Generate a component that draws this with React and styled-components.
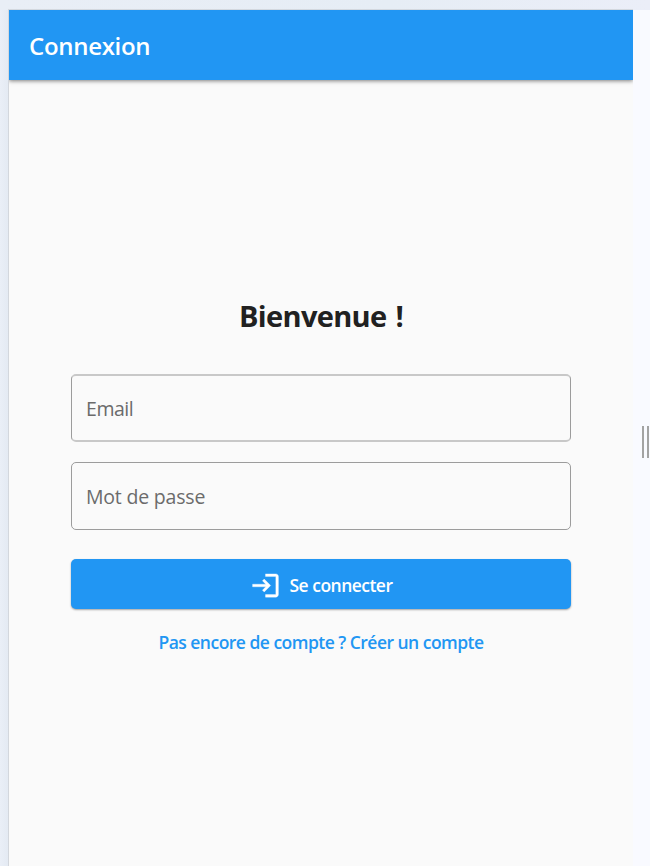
import React from "react";
import styled, { createGlobalStyle } from "styled-components";

const GlobalStyle = createGlobalStyle`
  * { box-sizing: border-box; }
  body { margin: 0; background: #f9faff; font-family: "Open Sans", "Noto Sans", sans-serif; overflow: hidden; }
`;

const Page = styled.div`
  display: flex;
  flex-direction: column;
  width: 650px;
  height: 866px;
  overflow: hidden;
`;

const TopStrip = styled.div`
  display: flex;
  flex: 0 0 10px;
  align-items: flex-end;
  background: linear-gradient(90deg, #e9eef6, #e6edf5 60%, #ebeef8);
`;

const TopEdge = styled.div`
  width: 625px;
  height: 1px;
  margin-left: 8px;
  background: #d3d8df;
`;

const Body = styled.div`
  display: flex;
  flex: 1;
  min-height: 0;
`;

const LeftGutter = styled.div`
  flex: 0 0 9px;
  background: linear-gradient(90deg, #eaeff7, #e4eaf3);
  border-right: 1px solid #d3d7dd;
`;

const Screen = styled.main`
  display: flex;
  flex-direction: column;
  flex: 0 0 624px;
  background: #fafafa;
  overflow: hidden;
`;

const AppBar = styled.header`
  display: flex;
  align-items: center;
  flex: 0 0 70px;
  padding: 1px 20px 0;
  background: #2196f3;
  box-shadow: 0 1px 4px rgba(0, 0, 0, 0.5);
`;

const Title = styled.h1`
  margin: 0;
  color: #fff;
  font-size: 24px;
  line-height: 32px;
  font-weight: 600;
  letter-spacing: -0.3px;
  white-space: nowrap;
`;

const Form = styled.form`
  display: flex;
  flex-direction: column;
  width: 500px;
  margin: 216px 0 0 62px;
`;

const Heading = styled.h2`
  margin: 0 0 38px;
  text-align: center;
  color: #212121;
  font-size: 29px;
  line-height: 40px;
  font-weight: 700;
  letter-spacing: -0.65px;
  word-spacing: 2px;
`;

const Field = styled.label`
  display: flex;
  align-items: center;
  height: 68px;
  margin-bottom: ${(p) => p.$gap}px;
  padding: 2px 14px 0;
  border: 1px solid #9c9c9c;
  border-top: ${(p) => (p.$soft ? "2px solid #c8c8c8" : "1px solid #9c9c9c")};
  border-bottom: ${(p) => (p.$soft ? "2px solid #c8c8c8" : "1px solid #9c9c9c")};
  border-radius: 5px;
`;

const FieldText = styled.span`
  color: #6b6b6b;
  font-size: 19.5px;
  line-height: 28px;
  letter-spacing: ${(p) => p.$spacing}px;
`;

const SubmitButton = styled.button`
  display: flex;
  align-items: center;
  justify-content: center;
  gap: 9px;
  height: 50px;
  padding: 2px 0 0;
  border: 0;
  border-radius: 5px;
  background: #2196f3;
  box-shadow: 0 1px 2px rgba(0, 0, 0, 0.35);
  color: #fff;
  font: 600 17.5px/26px "Open Sans", sans-serif;
  letter-spacing: -0.52px;
`;

const Icon = styled.svg`
  display: block;
  width: 31px;
  height: 31px;
`;

const RegisterLink = styled.a`
  align-self: center;
  margin-top: 19px;
  color: #2196f3;
  font-size: 17.5px;
  line-height: 28px;
  font-weight: 600;
  letter-spacing: -0.52px;
  white-space: nowrap;
`;

const RightRail = styled.aside`
  display: flex;
  flex: 1;
  align-items: flex-start;
  justify-content: flex-end;
  padding: 416px 1px 0 0;
  gap: 3px;
`;

const Grip = styled.span`
  width: 2px;
  height: 32px;
  background: #a3a3a3;
`;

export default function App() {
  return (
    <Page>
      <GlobalStyle />
      <TopStrip>
        <TopEdge />
      </TopStrip>
      <Body>
        <LeftGutter />
        <Screen>
          <AppBar>
            <Title>Connexion</Title>
          </AppBar>
          <Form>
            <Heading>Bienvenue !</Heading>
            <Field $gap={20} $soft>
              <FieldText $spacing={-0.45}>Email</FieldText>
            </Field>
            <Field $gap={29}>
              <FieldText $spacing={-0.2}>Mot de passe</FieldText>
            </Field>
            <SubmitButton type="button">
              <Icon viewBox="0 0 24 24" fill="currentColor" stroke="currentColor" strokeWidth="0.25">
                <path d="M11 7 9.6 8.4l2.6 2.6H2v2h10.2l-2.6 2.6L11 17l5-5-5-5zm9 12h-8v2h8c1.1 0 2-.9 2-2V5c0-1.1-.9-2-2-2h-8v2h8v14z" />
              </Icon>
              <span>Se connecter</span>
            </SubmitButton>
            <RegisterLink>Pas encore de compte ? Créer un compte</RegisterLink>
          </Form>
        </Screen>
        <RightRail>
          <Grip />
          <Grip />
        </RightRail>
      </Body>
    </Page>
  );
}
